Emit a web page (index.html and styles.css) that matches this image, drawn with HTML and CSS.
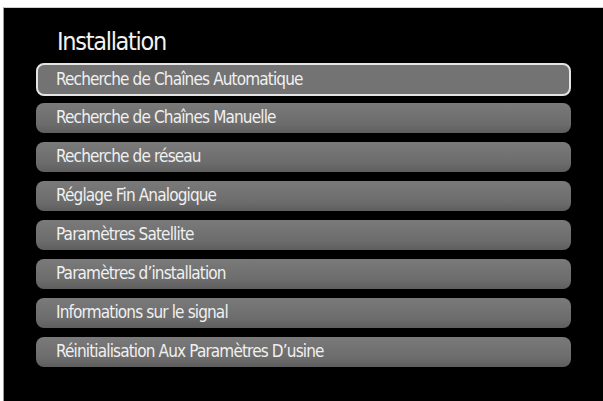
FILE: index.html
```html
<!DOCTYPE html>
<html lang="fr">
<head>
<meta charset="utf-8">
<title>Installation</title>
<link rel="stylesheet" href="styles.css">
</head>
<body>
<div class="screen">
  <h1 class="title">Installation</h1>
  <ul class="menu">
    <li class="item selected">Recherche de Chaînes Automatique</li>
    <li class="item">Recherche de Chaînes Manuelle</li>
    <li class="item">Recherche de réseau</li>
    <li class="item">Réglage Fin Analogique</li>
    <li class="item">Paramètres Satellite</li>
    <li class="item">Paramètres d’installation</li>
    <li class="item">Informations sur le signal</li>
    <li class="item">Réinitialisation Aux Paramètres D’usine</li>
  </ul>
</div>
</body>
</html>
```
FILE: styles.css
```css
html, body {
  margin: 0;
  padding: 0;
  background: #ffffff;
}
body {
  width: 603px;
  height: 401px;
  overflow: hidden;
  font-family: "DejaVu Sans Condensed", "Liberation Sans", sans-serif;
}
.screen {
  margin: 7px 0 0 3px;
  height: 394px;
  background: #000;
  border-left: 1px solid #9a9a9a;
  border-top: 1px solid #cfcfcf;
  box-sizing: border-box;
  padding: 19px 32px 0 32px;
}
.title {
  margin: 0 0 7px 21px;
  font-weight: normal;
  font-size: 25px;
  line-height: 29px;
  color: #f2f2f2;
  letter-spacing: -1.3px;
}
.menu {
  list-style: none;
  margin: 0;
  padding: 0;
  display: flex;
  flex-direction: column;
  gap: 9px;
}
.item {
  height: 30px;
  box-sizing: border-box;
  border-radius: 8px;
  background: linear-gradient(#7a7a7a, #6c6c6c 70%, #5e5e5e);
  color: #f0f0f0;
  font-size: 17px;
  line-height: 29px;
  padding-left: 20px;
  letter-spacing: -0.85px;
}
.item.selected {
  height: 33px;
  line-height: 29px;
  border: 2px solid #e4e4e4;
  padding-left: 18px;
  background: #737373;
  margin-bottom: -2px;
}
```
